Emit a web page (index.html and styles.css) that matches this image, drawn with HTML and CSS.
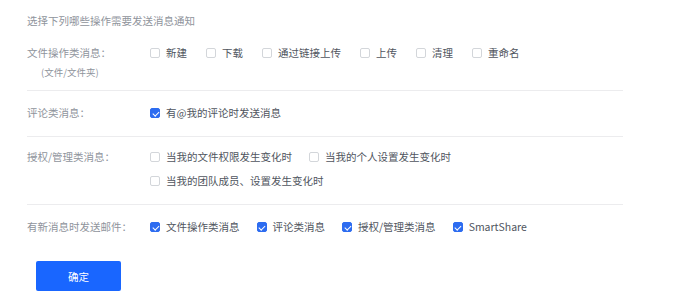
FILE: index.html
```html
<!DOCTYPE html>
<html lang="zh-CN">

<head>
    <meta charset="UTF-8">
    <meta name="viewport" content="width=device-width, initial-scale=1.0">
    <title>消息通知设置</title>
    <link rel="stylesheet" href="styles.css">
</head>

<body>
    <div class="setting">
        <div class="title">选择下列哪些操作需要发送消息通知</div>

        <div class="row">
            <div class="label">
                <div>文件操作类消息：</div>
                <div class="sub">(文件/文件夹)</div>
            </div>
            <div class="options wide">
                <label class="opt"><i class="box"></i>新建</label>
                <label class="opt"><i class="box"></i>下载</label>
                <label class="opt"><i class="box"></i>通过链接上传</label>
                <label class="opt"><i class="box"></i>上传</label>
                <label class="opt"><i class="box"></i>清理</label>
                <label class="opt"><i class="box"></i>重命名</label>
            </div>
        </div>

        <div class="row row2">
            <div class="label">评论类消息：</div>
            <div class="options">
                <label class="opt"><i class="box on"></i>有@我的评论时发送消息</label>
            </div>
        </div>

        <div class="row row3">
            <div class="label">授权/管理类消息：</div>
            <div class="options">
                <label class="opt"><i class="box"></i>当我的文件权限发生变化时</label>
                <label class="opt"><i class="box"></i>当我的个人设置发生变化时</label>
                <label class="opt"><i class="box"></i>当我的团队成员、设置发生变化时</label>
            </div>
        </div>

        <div class="row row4">
            <div class="label">有新消息时发送邮件：</div>
            <div class="options">
                <label class="opt"><i class="box on"></i>文件操作类消息</label>
                <label class="opt"><i class="box on"></i>评论类消息</label>
                <label class="opt"><i class="box on"></i>授权/管理类消息</label>
                <label class="opt"><i class="box on"></i>SmartShare</label>
            </div>
        </div>

        <button class="btn">确定</button>
    </div>
</body>

</html>
```

FILE: styles.css
```css
* {
    margin: 0;
    padding: 0;
    box-sizing: border-box;
}

body {
    background: #fff;
    font-family: "Noto Sans CJK SC", "Noto Sans", sans-serif;
    font-size: 10.5px;
    color: #50555e;
}

.setting {
    width: 623px;
    padding: 13px 0 0 27px;
}

.title {
    line-height: 16px;
    color: #8f949c;
}

.row {
    display: flex;
    padding: 16px 0 10px;
    border-bottom: 1px solid #ececee;
    line-height: 16px;
}

.row2 {
    padding: 14px 0 15px;
}

.row3 {
    padding: 12px 0 15px;
}

.row4 {
    padding: 14px 0 0;
    border-bottom: none;
}

.label {
    width: 123px;
    flex-shrink: 0;
    color: #8f949c;
}

.label .sub {
    margin-top: 3px;
    padding-left: 14px;
    font-size: 9.5px;
}

.options {
    flex: 1;
    display: flex;
    flex-wrap: wrap;
    align-items: flex-start;
    align-content: flex-start;
    row-gap: 8px;
}

.opt {
    display: flex;
    align-items: center;
    margin-right: 17px;
    white-space: nowrap;
}

.wide .opt {
    margin-right: 19px;
}

.box {
    width: 10px;
    height: 10px;
    margin-right: 6px;
    border: 1px solid #d3d6da;
    border-radius: 2px;
    background: #fff;
    position: relative;
}

.box.on {
    background: #2d6cf0;
    border-color: #2d6cf0;
}

.box.on::after {
    content: "";
    position: absolute;
    left: 2.5px;
    top: 0.5px;
    width: 2.5px;
    height: 5px;
    border: solid #fff;
    border-width: 0 1.2px 1.2px 0;
    transform: rotate(45deg);
}

.btn {
    display: block;
    margin: 26px 0 0 9px;
    width: 85px;
    height: 30px;
    border: none;
    border-radius: 2px;
    background: #1966ff;
    color: #fff;
    font-family: inherit;
    font-size: 10.5px;
    cursor: pointer;
}
```
